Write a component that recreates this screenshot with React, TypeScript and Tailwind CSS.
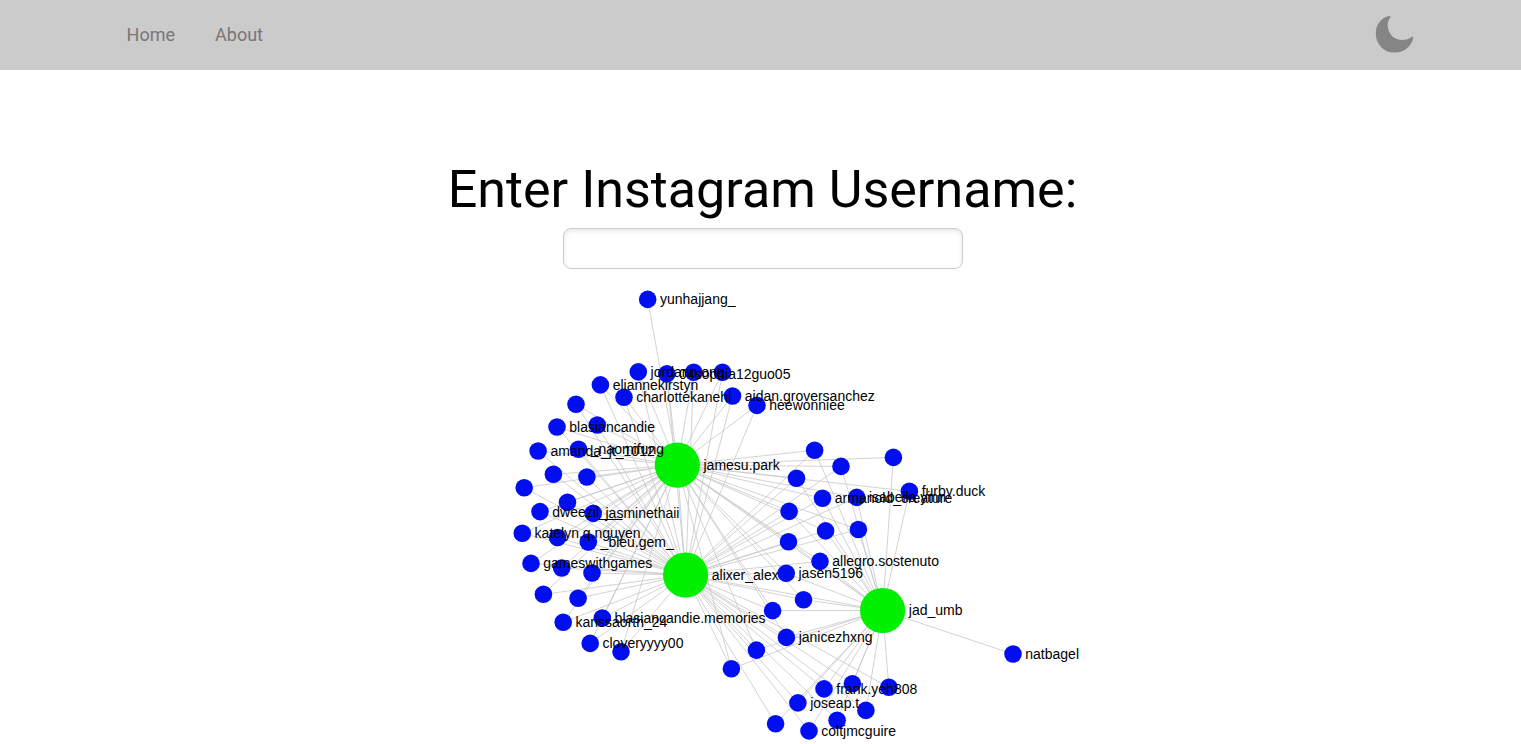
type Hub = "J" | "A" | "D";

interface GraphNode {
  x: number;
  y: number;
  links: string;
  label?: string;
}

const hubs: Record<Hub, { x: number; y: number; label: string }> = {
  J: { x: 677.3, y: 465.1, label: "jamesu.park" },
  A: { x: 685.6, y: 575, label: "alixer_alex" },
  D: { x: 882.6, y: 610.5, label: "jad_umb" },
};

const hubLinks: [Hub, Hub][] = [
  ["J", "A"],
  ["J", "D"],
  ["A", "D"],
];

const nodes: GraphNode[] = [
  { x: 647.7, y: 299.4, links: "J", label: "yunhajjang_" },
  { x: 638.3, y: 371.9, links: "JA", label: "jordann.ong" },
  { x: 666.8, y: 373.9, links: "JA", label: "04sophia12guo05" },
  { x: 693.7, y: 372.3, links: "JA" },
  { x: 722.5, y: 372.3, links: "JA" },
  { x: 600.4, y: 384.9, links: "JA", label: "eliannekirstyn" },
  { x: 624, y: 397.3, links: "JA", label: "charlottekanehl" },
  { x: 576, y: 404.3, links: "JA" },
  { x: 597.3, y: 425, links: "JA" },
  { x: 557, y: 427, links: "JA", label: "blasiancandie" },
  { x: 732.5, y: 396, links: "JA", label: "aidan.groversanchez" },
  { x: 757, y: 405.4, links: "JA", label: "heewonniee" },
  { x: 538.1, y: 451, links: "JA", label: "amanda_jt_1012" },
  { x: 578.5, y: 449.2, links: "JA", label: "_naomifung" },
  { x: 553.4, y: 474.3, links: "JA" },
  { x: 586.9, y: 477, links: "JA" },
  { x: 524.2, y: 487.7, links: "JA" },
  { x: 567.5, y: 502.2, links: "JA" },
  { x: 540, y: 511.6, links: "JA", label: "dweezil___" },
  { x: 593.2, y: 513.4, links: "JA", label: "jasminethaii" },
  { x: 522.3, y: 533.3, links: "JA", label: "katelyn.q.nguyen" },
  { x: 557.6, y: 537.5, links: "JA" },
  { x: 588.3, y: 542, links: "JA", label: "_bleu.gem_" },
  { x: 531, y: 563.4, links: "JA", label: "gameswithgames" },
  { x: 561.7, y: 568, links: "JA" },
  { x: 592, y: 573, links: "JA" },
  { x: 543.4, y: 594.3, links: "JA" },
  { x: 578.1, y: 598.3, links: "JA" },
  { x: 563.2, y: 622.3, links: "JA", label: "karissaorth_24" },
  { x: 602.3, y: 618, links: "JA", label: "blasiancandie.memories" },
  { x: 590.2, y: 643.4, links: "JA", label: "cloveryyyy00" },
  { x: 621, y: 651.8, links: "JA" },
  { x: 814.6, y: 450.2, links: "JAD" },
  { x: 893.4, y: 457.4, links: "JD" },
  { x: 841, y: 466.4, links: "JAD" },
  { x: 796.5, y: 478.2, links: "JAD" },
  { x: 909.4, y: 491.3, links: "JD", label: "furby.duck" },
  { x: 822.5, y: 498.3, links: "JAD", label: "armanold_creature" },
  { x: 856.7, y: 497.4, links: "JAD", label: "isabella.yinn" },
  { x: 789.1, y: 511.4, links: "JAD" },
  { x: 825.6, y: 530.9, links: "JAD" },
  { x: 858.4, y: 529.5, links: "JAD" },
  { x: 788.5, y: 541.8, links: "JAD" },
  { x: 820, y: 561.4, links: "JAD", label: "allegro.sostenuto" },
  { x: 786.2, y: 573.2, links: "JAD", label: "jasen5196" },
  { x: 803.5, y: 599.8, links: "JAD" },
  { x: 772.6, y: 610.6, links: "JAD" },
  { x: 786.4, y: 637.4, links: "JAD", label: "janicezhxng" },
  { x: 756.4, y: 650.1, links: "JAD" },
  { x: 731.4, y: 668.8, links: "JAD" },
  { x: 1013, y: 654, links: "D", label: "natbagel" },
  { x: 824, y: 688.9, links: "AD", label: "frank.yeh808" },
  { x: 852.4, y: 683.7, links: "AD" },
  { x: 888.9, y: 687.3, links: "AD" },
  { x: 797.9, y: 702.9, links: "AD", label: "joseap.t" },
  { x: 865.9, y: 710.4, links: "AD" },
  { x: 837.1, y: 720.2, links: "AD" },
  { x: 775.6, y: 723.7, links: "AD" },
  { x: 809, y: 730.9, links: "AD", label: "coltjmcguire" },
];

const hubKeys: Hub[] = ["J", "A", "D"];

function NetworkGraph() {
  return (
    <svg
      className="block h-[475px] w-[1521px] shrink-0 font-['Liberation_Sans',Arial,sans-serif] text-[14px]"
      viewBox="0 269 1521 475"
    >
      <g stroke="#c8c8c8" strokeWidth="0.8">
        {hubLinks.map(([from, to]) => (
          <line key={from + to} x1={hubs[from].x} y1={hubs[from].y} x2={hubs[to].x} y2={hubs[to].y} />
        ))}
        {nodes.flatMap((node, i) =>
          hubKeys
            .filter((key) => node.links.includes(key))
            .map((key) => (
              <line key={`${i}-${key}`} x1={node.x} y1={node.y} x2={hubs[key].x} y2={hubs[key].y} />
            )),
        )}
      </g>
      <g fill="#000ef0">
        {nodes.map((node, i) => (
          <circle key={i} cx={node.x} cy={node.y} r="8.8" />
        ))}
      </g>
      <g fill="#00f000">
        {hubKeys.map((key) => (
          <circle key={key} cx={hubs[key].x} cy={hubs[key].y} r="22.6" />
        ))}
      </g>
      <g fill="#000">
        {nodes.map((node, i) =>
          node.label ? (
            <text key={i} x={node.x + 12.3} y={Math.round(node.y) + 5}>
              {node.label}
            </text>
          ) : null,
        )}
        {hubKeys.map((key) => (
          <text key={key} x={hubs[key].x + 26.2} y={hubs[key].y + 4.8}>
            {hubs[key].label}
          </text>
        ))}
      </g>
    </svg>
  );
}

function MoonIcon() {
  return (
    <svg className="h-10 w-10" viewBox="0 0 40 40" fill="#858585" aria-hidden="true">
      <path d="M15.3 1.1C7.5 2.5 1.8 9.6 1.8 18.4C1.8 29.2 10 37.6 20.6 37.6C30.2 37.6 37.6 31.2 39.2 23C39.4 21.9 38.6 21.5 37.7 22.1C35.1 24 31.9 25 28.6 25C20.3 25 13.7 18.6 13.7 10.4C13.7 7.8 14.6 5 16.2 2.6C16.8 1.6 16.3 0.9 15.3 1.1Z" />
    </svg>
  );
}

export default function App() {
  return (
    <div className="h-[744px] w-full overflow-hidden bg-white font-[Roboto,sans-serif] text-black">
      <header className="flex h-[70px] items-center justify-between bg-[#cbcbcb] pr-[107px] pl-[126.6px]">
        <nav className="flex gap-10 text-[18px] leading-6 text-[#777]">
          <a href="#home">Home</a>
          <a href="#about">About</a>
        </nav>
        <button type="button" aria-label="Toggle theme">
          <MoonIcon />
        </button>
      </header>
      <main className="flex flex-col pt-[89px]">
        <div className="flex flex-col items-center pl-[5px]">
          <label htmlFor="username" className="pr-px text-[52px] leading-[62px] whitespace-nowrap">
            Enter Instagram Username:
          </label>
          <input
            id="username"
            type="text"
            className="mt-[7px] h-[41px] w-[400px] rounded-lg border border-[#ccc] bg-white px-3 shadow-[inset_0_2px_4px_rgba(0,0,0,0.1)] outline-none"
          />
        </div>
        <NetworkGraph />
      </main>
    </div>
  );
}
